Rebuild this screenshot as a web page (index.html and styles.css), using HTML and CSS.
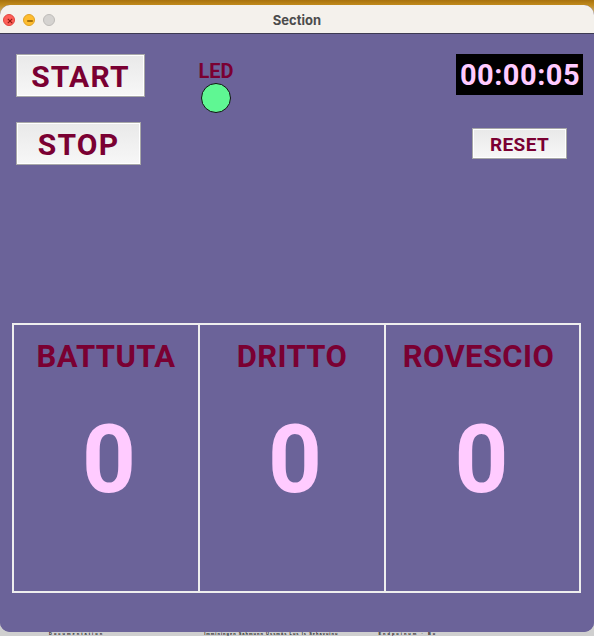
FILE: index.html
```html
<!DOCTYPE html>
<html lang="it">
<head>
<meta charset="utf-8">
<title>Section</title>
<link rel="stylesheet" href="styles.css">
</head>
<body>
<div class="window">
  <div class="titlebar">
    <div class="lights">
      <span class="light light-close"><svg viewBox="0 0 12 12" width="12" height="12"><path d="M3.8 3.8 L8.2 8.2 M8.2 3.8 L3.8 8.2" stroke="#8c1a10" stroke-width="1.1" fill="none"/></svg></span>
      <span class="light light-min"><svg viewBox="0 0 12 12" width="12" height="12"><path d="M3.2 6 H8.8" stroke="#8a5a00" stroke-width="1.4" fill="none"/></svg></span>
      <span class="light light-max"></span>
    </div>
    <div class="title">Section</div>
  </div>
  <div class="content">
    <div class="controls">
      <div class="col-left">
        <button class="btn btn-start">START</button>
        <button class="btn btn-stop">STOP</button>
      </div>
      <div class="col-led">
        <div class="led-label">LED</div>
        <div class="led"></div>
      </div>
      <div class="col-right">
        <div class="timer">00:00:05</div>
        <button class="btn btn-reset">RESET</button>
      </div>
    </div>
    <div class="board">
      <div class="cell cell-1">
        <div class="label">BATTUTA</div>
        <div class="count">0</div>
      </div>
      <div class="cell cell-2">
        <div class="label">DRITTO</div>
        <div class="count">0</div>
      </div>
      <div class="cell cell-3">
        <div class="label">ROVESCIO</div>
        <div class="count">0</div>
      </div>
    </div>
  </div>
</div>
<div class="desk">
  <span class="desk-a">Documentation</span>
  <span class="desk-b">Imminingen Sahmunn Ussmäs Lus Is Sehavuinu</span>
  <span class="desk-c">Endpoinum · Bo</span>
</div>
</body>
</html>
```

FILE: styles.css
```css
html, body {
  margin: 0;
  padding: 0;
}

body {
  width: 594px;
  height: 636px;
  overflow: hidden;
  background: linear-gradient(to bottom, #a8720e 0, #c08a1c 5px, #cfcfcf 20px, #cfcfcf 100%);
  font-family: Roboto, "Liberation Sans", sans-serif;
  padding-top: 5px;
  box-sizing: border-box;
}

.window {
  width: 594px;
  height: 627px;
  border-radius: 10px;
  overflow: hidden;
  background: #6b6399;
  display: flex;
  flex-direction: column;
}

.titlebar {
  height: 28px;
  flex: 0 0 28px;
  background: #f4f1ec;
  border-bottom: 1px solid #3d3a52;
  display: flex;
  align-items: center;
  position: relative;
}

.lights {
  display: flex;
  gap: 8px;
  padding-left: 3px;
  padding-top: 2px;
}

.light {
  width: 12px;
  height: 12px;
  border-radius: 50%;
  box-sizing: border-box;
  display: block;
}

.light svg { display: block; }

.light-close {
  background: #fe5f57;
  border: 0.5px solid #e0443e;
}

.light-min {
  background: #febc2e;
  border: 0.5px solid #dea123;
}

.light-max {
  background: #d5d3d0;
  border: 0.5px solid #bdbbb8;
}

.title {
  position: absolute;
  left: 0;
  right: 0;
  top: 0;
  bottom: 0;
  display: flex;
  align-items: center;
  justify-content: center;
  padding-top: 1px;
  font-family: Inter, "Liberation Sans", sans-serif;
  font-weight: 700;
  font-size: 13px;
  color: #4c4c4c;
}

.content {
  flex: 1;
  background: #6b6399;
}

.controls {
  display: flex;
  padding: 20px 11px 0 16px;
}

.col-left {
  display: flex;
  flex-direction: column;
  align-items: flex-start;
  gap: 25px;
}

.btn {
  font-family: Roboto, "Liberation Sans", sans-serif;
  font-weight: 700;
  color: #7a0032;
  background: linear-gradient(to bottom, #e9e9e9, #f7f7f7);
  border: 1px solid #a8a8a8;
  box-shadow: inset 0 0 0 1px #ffffff;
  box-sizing: border-box;
  padding: 0;
  margin: 0;
  display: flex;
  align-items: center;
  justify-content: center;
}

.btn-start {
  width: 129px;
  height: 43px;
  font-size: 30px;
  letter-spacing: 1.2px;
  padding-top: 1px;
}

.btn-stop {
  width: 125px;
  height: 43px;
  font-size: 30px;
  letter-spacing: 1.2px;
  padding-top: 1px;
}

.btn-reset {
  width: 95px;
  height: 31px;
  font-size: 19px;
  letter-spacing: 0.4px;
  margin-top: 33px;
  margin-right: 16px;
  padding-top: 1px;
}

.col-led {
  margin-left: 53px;
  width: 36px;
  display: flex;
  flex-direction: column;
  align-items: center;
}

.led-label {
  font-weight: 700;
  font-size: 20px;
  line-height: 20px;
  margin-top: 7px;
  color: #7a0032;
}

.led {
  margin-top: 2px;
  width: 30px;
  height: 30px;
  box-sizing: border-box;
  border-radius: 50%;
  background: #5ff793;
  border: 1px solid #111111;
}

.col-right {
  margin-left: auto;
  display: flex;
  flex-direction: column;
  align-items: flex-end;
}

.timer {
  width: 127px;
  height: 41px;
  background: #000000;
  color: #ffcbff;
  font-weight: 700;
  font-size: 29px;
  display: flex;
  align-items: center;
  justify-content: center;
  letter-spacing: 0.5px;
  padding-left: 1px;
  box-sizing: border-box;
}

.board {
  margin: 158px 0 0 12px;
  width: 569px;
  height: 270px;
  box-sizing: border-box;
  border: 2px solid #eeeeee;
  display: grid;
  grid-template-columns: 184px 186px 1fr;
}

.cell {
  display: flex;
  flex-direction: column;
  align-items: center;
  padding-top: 14px;
}

.cell-2, .cell-3 {
  border-left: 2px solid #eeeeee;
}

.cell-3 {
  padding-right: 8px;
}

.label {
  font-weight: 700;
  font-size: 31px;
  line-height: 36px;
  letter-spacing: 0.4px;
  color: #7a0032;
}

.count {
  margin-top: 35px;
  font-weight: 700;
  font-size: 94px;
  line-height: 100px;
  color: #ffcbff;
  padding-left: 6px;
}

.desk {
  height: 4px;
  display: flex;
  font-family: "Liberation Sans", sans-serif;
  font-size: 4px;
  line-height: 4px;
  color: #222222;
  white-space: nowrap;
  overflow: hidden;
}

.desk span {
  display: block;
  font-weight: 700;
}

.desk-a { margin-left: 49px; letter-spacing: 2px; }
.desk-b { margin-left: 100px; letter-spacing: 1px; }
.desk-c { margin-left: 40px; letter-spacing: 2px; }
```
